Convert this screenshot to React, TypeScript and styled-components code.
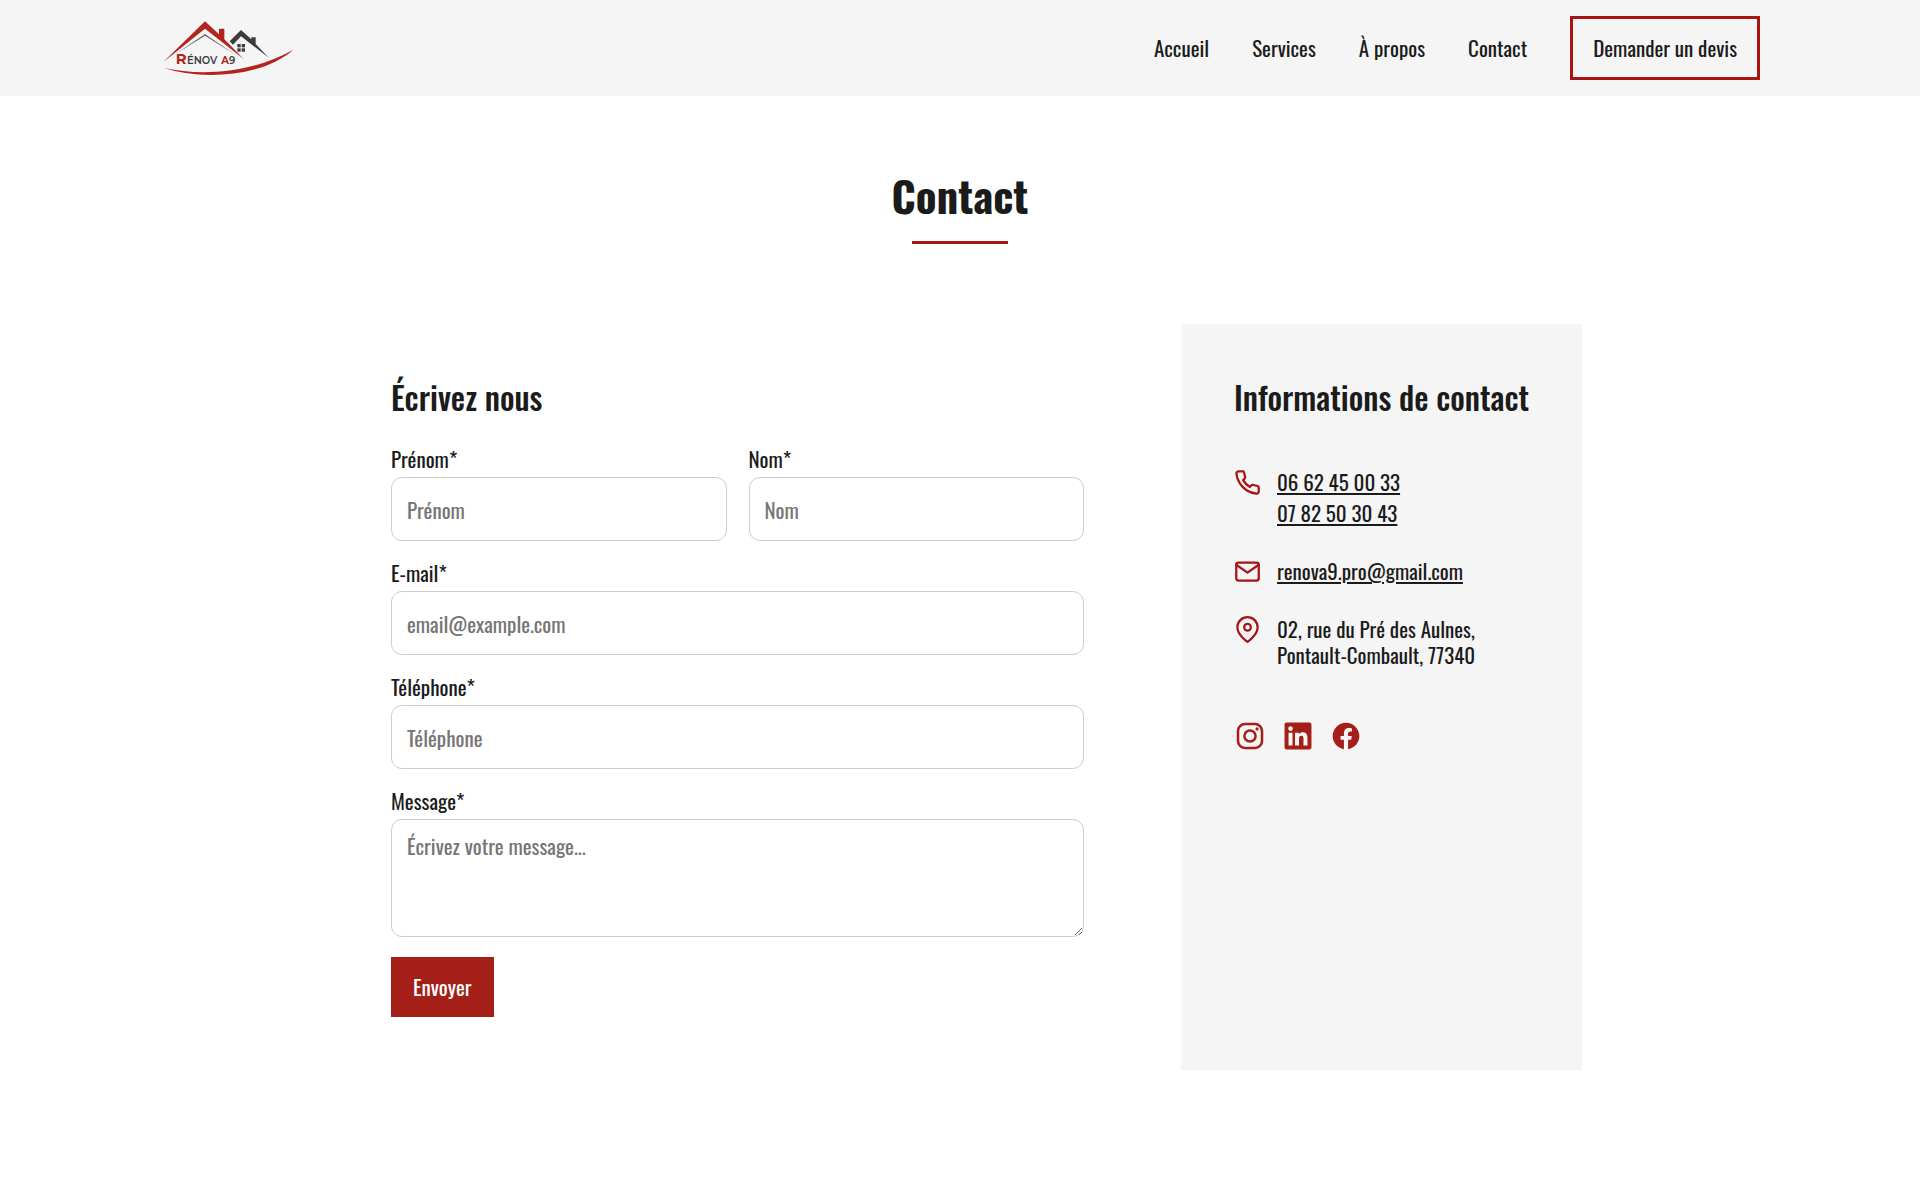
import React from "react";
import styled, { createGlobalStyle } from "styled-components";
import { FiPhone, FiMail, FiMapPin } from "react-icons/fi";
import { RiFacebookCircleFill } from "react-icons/ri";

const red = "#a31f17";
const lineRed = "#a81414";
const ink = "#1b1b1b";
const grey = "#f5f5f5";

const GlobalStyle = createGlobalStyle`
  *, *::before, *::after { box-sizing: border-box; }
  body {
    margin: 0;
    background: #fff;
    color: ${ink};
    font-family: Oswald, "Liberation Sans Narrow", "Roboto Condensed", "Liberation Sans", sans-serif;
    font-size: 21px;
    line-height: 24px;
  }
  h1, h2, p, ul { margin: 0; padding: 0; }
  a { color: inherit; }
`;

const Header = styled.header`
  display: flex;
  align-items: center;
  justify-content: space-between;
  padding: 16px 160px;
  background: ${grey};
`;

const HomeLink = styled.a`
  display: block;
  line-height: 0;
`;

const Nav = styled.nav`
  display: flex;
  align-items: center;
  gap: 43px;
`;

const NavLink = styled.a`
  text-decoration: none;
`;

const QuoteLink = styled(NavLink)`
  display: flex;
  align-items: center;
  height: 64px;
  padding: 0 20px;
  border: 3px solid ${lineRed};
`;

const Main = styled.main`
  padding: 72px 32px 128px;
`;

const Title = styled.h1`
  display: flex;
  flex-direction: column;
  align-items: center;
  gap: 20px;
  margin-bottom: 80px;
  font-size: 43px;
  line-height: 53px;
  font-weight: 700;

  &::after {
    content: "";
    width: 96px;
    height: 3px;
    background: ${lineRed};
  }
`;

const Columns = styled.div`
  display: grid;
  grid-template-columns: 1fr 401px;
  gap: 44px;
  max-width: 1244px;
  margin: 0 auto;
`;

const Panel = styled.section<{ $filled?: boolean }>`
  padding: 53px;
  background: ${(p) => (p.$filled ? grey : "transparent")};
`;

const Heading = styled.h2<{ $gap: number }>`
  margin-bottom: ${(p) => p.$gap}px;
  font-size: 32px;
  line-height: 40px;
  font-weight: 500;
  white-space: nowrap;
`;

const Form = styled.form`
  display: flex;
  flex-direction: column;
  align-items: stretch;
  gap: 20px;
`;

const Pair = styled.div`
  display: grid;
  grid-template-columns: 1fr 1fr;
  gap: 22px;
`;

const FieldBox = styled.div`
  display: flex;
  flex-direction: column;
  gap: 6px;
`;

const Input = styled.input`
  width: 100%;
  height: 64px;
  padding: 0 15px;
  border: 1px solid #ccc;
  border-radius: 11px;
  background: #fff;
  font: inherit;
  color: inherit;

  &::placeholder { color: #757575; opacity: 1; }
`;

const TextArea = styled.textarea`
  display: block;
  width: 100%;
  height: 118px;
  padding: 14px 15px;
  border: 1px solid #ccc;
  border-radius: 11px;
  background: #fff;
  font: inherit;
  color: inherit;
  resize: both;

  &::placeholder { color: #757575; opacity: 1; }
`;

const Submit = styled.button`
  align-self: flex-start;
  height: 60px;
  padding: 0 22px;
  border: 0;
  background: ${red};
  color: #fff;
  font: inherit;
`;

const ContactList = styled.ul`
  display: flex;
  flex-direction: column;
  gap: 27px;
  margin-bottom: 52px;
  list-style: none;
`;

const Lines = styled.div`
  display: flex;
  flex-direction: column;
  align-items: flex-start;
  white-space: nowrap;
  line-height: 31px;
`;

const Address = styled(Lines)`
  padding-top: 3px;
  line-height: 26px;
`;

const ContactItem = styled.li`
  display: flex;
  gap: 16px;

  svg {
    flex: none;
    width: 27px;
    height: 27px;
    margin-top: 3px;
    color: ${lineRed};
  }
`;

const Socials = styled.div`
  display: flex;
  gap: 16px;

  a { display: block; line-height: 0; color: ${red}; }
  svg { width: 32px; height: 32px; }
`;

function Logo() {
  return (
    <svg width="134" height="56" viewBox="30 30 402 168" role="img" aria-label="Rénov A9">
      <path d="M40 156 L165 34 L207 73 V56 H223 V88 L282 148 L165 56 Z" fill="#b3241d" />
      <path d="M76 133 L165 72 L256 134 L165 77 Z" fill="#666" />
      <path d="M239 94 L273 60 L304 88 V82 H317 V102 L356 143 L273 79 L249 104 Z" fill="#3c3c3e" />
      <g fill="#3c3c3e">
        <rect x="262" y="102" width="10" height="10" />
        <rect x="275" y="102" width="10" height="10" />
        <rect x="262" y="115" width="10" height="10" />
        <rect x="275" y="115" width="10" height="10" />
      </g>
      <path d="M44 174 C150 198 300 192 430 119 C330 207 140 208 44 174 Z" fill="#b3241d" />
      <text y="161" fontFamily="Montserrat, Inter, sans-serif" fontWeight="600" fontSize="30" fill="#3c3c3e">
        <tspan x="77" fontSize="44" fontWeight="700" fill="#b3241d">R</tspan>
        <tspan x="111">ÉNOV</tspan>
        <tspan x="214" fontWeight="700" fill="#b3241d">A</tspan>
        <tspan x="237">9</tspan>
      </text>
    </svg>
  );
}

function InstagramIcon() {
  return (
    <svg viewBox="0 0 24 24" fill="none" stroke="currentColor" strokeWidth="1.9">
      <rect x="3" y="3" width="18" height="18" rx="5.2" />
      <circle cx="12" cy="12" r="4.2" />
      <circle cx="17.3" cy="6.7" r="1.2" fill="currentColor" stroke="none" />
    </svg>
  );
}

function LinkedinIcon() {
  return (
    <svg viewBox="1.3 1.3 21.4 21.4" fill="currentColor">
      <path d="M18.335 18.339H15.67v-4.177c0-.996-.02-2.278-1.39-2.278-1.389 0-1.601 1.084-1.601 2.205v4.25h-2.666V9.75h2.56v1.17h.035c.358-.674 1.228-1.387 2.528-1.387 2.7 0 3.2 1.778 3.2 4.091v4.715zM7.003 8.575a1.546 1.546 0 0 1-1.548-1.549 1.548 1.548 0 1 1 1.547 1.549zm1.336 9.764H5.666V9.75H8.34v8.589zM19.67 3H4.329C3.593 3 3 3.58 3 4.297v15.406C3 20.42 3.594 21 4.328 21h15.338C20.4 21 21 20.42 21 19.703V4.297C21 3.58 20.4 3 19.666 3h.003z" />
    </svg>
  );
}

interface FieldProps {
  id: string;
  label: string;
  placeholder: string;
  type?: string;
}

function Field({ id, label, placeholder, type = "text" }: FieldProps) {
  return (
    <FieldBox>
      <label htmlFor={id}>{label}*</label>
      <Input id={id} name={id} type={type} placeholder={placeholder} required />
    </FieldBox>
  );
}

export default function App() {
  return (
    <>
      <GlobalStyle />
      <Header>
        <HomeLink href="#accueil"><Logo /></HomeLink>
        <Nav>
          <NavLink href="#accueil">Accueil</NavLink>
          <NavLink href="#services">Services</NavLink>
          <NavLink href="#a-propos">À propos</NavLink>
          <NavLink href="#contact">Contact</NavLink>
          <QuoteLink href="#devis">Demander un devis</QuoteLink>
        </Nav>
      </Header>
      <Main>
        <Title>Contact</Title>
        <Columns>
          <Panel>
            <Heading $gap={30}>Écrivez nous</Heading>
            <Form>
              <Pair>
                <Field id="prenom" label="Prénom" placeholder="Prénom" />
                <Field id="nom" label="Nom" placeholder="Nom" />
              </Pair>
              <Field id="email" label="E-mail" placeholder="email@example.com" type="email" />
              <Field id="telephone" label="Téléphone" placeholder="Téléphone" type="tel" />
              <FieldBox>
                <label htmlFor="message">Message*</label>
                <TextArea id="message" name="message" placeholder="Écrivez votre message..." required />
              </FieldBox>
              <Submit type="submit">Envoyer</Submit>
            </Form>
          </Panel>
          <Panel $filled>
            <Heading $gap={49}>Informations de contact</Heading>
            <ContactList>
              <ContactItem>
                <FiPhone />
                <Lines>
                  <a href="tel:+33662450033">06 62 45 00 33</a>
                  <a href="tel:+33782503043">07 82 50 30 43</a>
                </Lines>
              </ContactItem>
              <ContactItem>
                <FiMail />
                <Lines>
                  <a href="mailto:renova9.pro@gmail.com">renova9.pro@gmail.com</a>
                </Lines>
              </ContactItem>
              <ContactItem>
                <FiMapPin />
                <Address>
                  <span>02, rue du Pré des Aulnes,</span>
                  <span>Pontault-Combault, 77340</span>
                </Address>
              </ContactItem>
            </ContactList>
            <Socials>
              <a href="#instagram" aria-label="Instagram"><InstagramIcon /></a>
              <a href="#linkedin" aria-label="LinkedIn"><LinkedinIcon /></a>
              <a href="#facebook" aria-label="Facebook"><RiFacebookCircleFill /></a>
            </Socials>
          </Panel>
        </Columns>
      </Main>
    </>
  );
}
